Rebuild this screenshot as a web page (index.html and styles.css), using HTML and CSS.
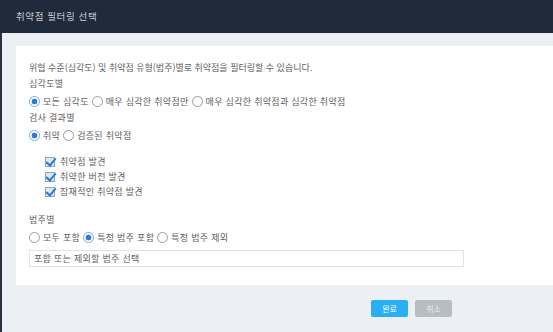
FILE: index.html
```html
<!DOCTYPE html>
<html lang="ko">
<head>
  <meta charset="UTF-8" />
  <title>취약점 필터링 선택</title>
  <link rel="stylesheet" href="styles.css">
</head>
<body>

  <div class="dialog">
    <div class="dialog-header">취약점 필터링 선택</div>

    <div class="dialog-body">
      <div class="panel">
        <div class="desc">위협 수준(심각도) 및 취약점 유형(범주)별로 취약점을 필터링할 수 있습니다.</div>

        <div class="group-label">심각도별</div>
        <div class="radio-row">
          <label class="radio"><span class="dot checked"></span>모든 심각도</label>
          <label class="radio"><span class="dot"></span>매우 심각한 취약점만</label>
          <label class="radio"><span class="dot"></span>매우 심각한 취약점과 심각한 취약점</label>
        </div>

        <div class="group-label">검사 결과별</div>
        <div class="radio-row">
          <label class="radio"><span class="dot checked"></span>취약</label>
          <label class="radio"><span class="dot"></span>검증된 취약점</label>
        </div>

        <div class="check-list">
          <label class="check"><span class="box"></span>취약점 발견</label>
          <label class="check"><span class="box"></span>취약한 버전 발견</label>
          <label class="check"><span class="box"></span>잠재적인 취약점 발견</label>
        </div>

        <div class="group-label category">범주별</div>
        <div class="radio-row">
          <label class="radio"><span class="dot"></span>모두 포함</label>
          <label class="radio"><span class="dot checked"></span>특정 범주 포함</label>
          <label class="radio"><span class="dot"></span>특정 범주 제외</label>
        </div>

        <div class="select-box">포함 또는 제외할 범주 선택</div>
      </div>
    </div>

    <div class="dialog-footer">
      <button class="btn btn-primary">완료</button>
      <button class="btn btn-cancel">취소</button>
    </div>
  </div>

</body>
</html>
```

FILE: styles.css
```css
:root {
  --header-color: #1f2a3a;
  --page-color: #eceff3;
  --text-color: #606060;
  --blue: #2b7bd6;
  --primary-btn: #2ab0f2;
  --cancel-btn: #b6bdc3;
}

body {
  margin: 0;
  padding: 0;
  font-family: "Noto Sans CJK KR", "Noto Sans", sans-serif;
  font-size: 9px;
  color: var(--text-color);
}

.dialog {
  width: 553px;
  height: 332px;
  box-sizing: border-box;
  background: var(--page-color);
  border-left: 2px solid #2a3342;
  display: flex;
  flex-direction: column;
}

.dialog-header {
  height: 33px;
  line-height: 33px;
  margin-left: -2px;
  padding-left: 16px;
  background: var(--header-color);
  color: #c9cdd3;
  font-size: 9.5px;
  letter-spacing: 0.6px;
}

.dialog-body {
  padding: 13px 0 0 14px;
}

.panel {
  height: 239px;
  box-sizing: border-box;
  background: #ffffff;
  padding: 14px 0 0 13px;
}

.desc,
.group-label {
  line-height: 16px;
}

.group-label {
  letter-spacing: 0.3px;
}

.radio-row {
  display: flex;
  align-items: center;
  height: 18px;
  gap: 3px;
}

.radio,
.check {
  display: flex;
  align-items: center;
  gap: 3px;
  letter-spacing: 0.3px;
}

.dot {
  width: 9px;
  height: 9px;
  border: 1px solid #979ca3;
  border-radius: 50%;
  background: #ffffff;
}

.dot.checked {
  border-color: #7fa9d8;
  background: radial-gradient(circle, var(--blue) 0 2.6px, #ffffff 3.2px);
}

.check-list {
  margin-top: 10px;
  padding-left: 16px;
}

.check {
  height: 15px;
  gap: 5px;
}

.box {
  position: relative;
  width: 8px;
  height: 8px;
  border: 1px solid #8fa6c2;
  background: #dfe7f0;
}

.box::after {
  content: '';
  position: absolute;
  left: 2px;
  top: -2px;
  width: 4px;
  height: 8px;
  border-right: 2px solid var(--blue);
  border-bottom: 2px solid var(--blue);
  transform: rotate(40deg);
}

.group-label.category {
  margin-top: 13px;
}

.select-box {
  margin-top: 4px;
  width: 435px;
  height: 17px;
  box-sizing: border-box;
  border: 1px solid #e1e3e6;
  padding-left: 4px;
  line-height: 15px;
  letter-spacing: 0.3px;
}

.dialog-footer {
  display: flex;
  justify-content: flex-end;
  gap: 7px;
  padding: 15px 101px 0 0;
}

.btn {
  width: 37px;
  height: 17px;
  border: none;
  border-radius: 2px;
  color: #ffffff;
  font-family: inherit;
  font-size: 8px;
  padding: 0;
  cursor: pointer;
}

.btn-primary {
  background: var(--primary-btn);
}

.btn-cancel {
  background: var(--cancel-btn);
  color: #e8ecef;
}
```
